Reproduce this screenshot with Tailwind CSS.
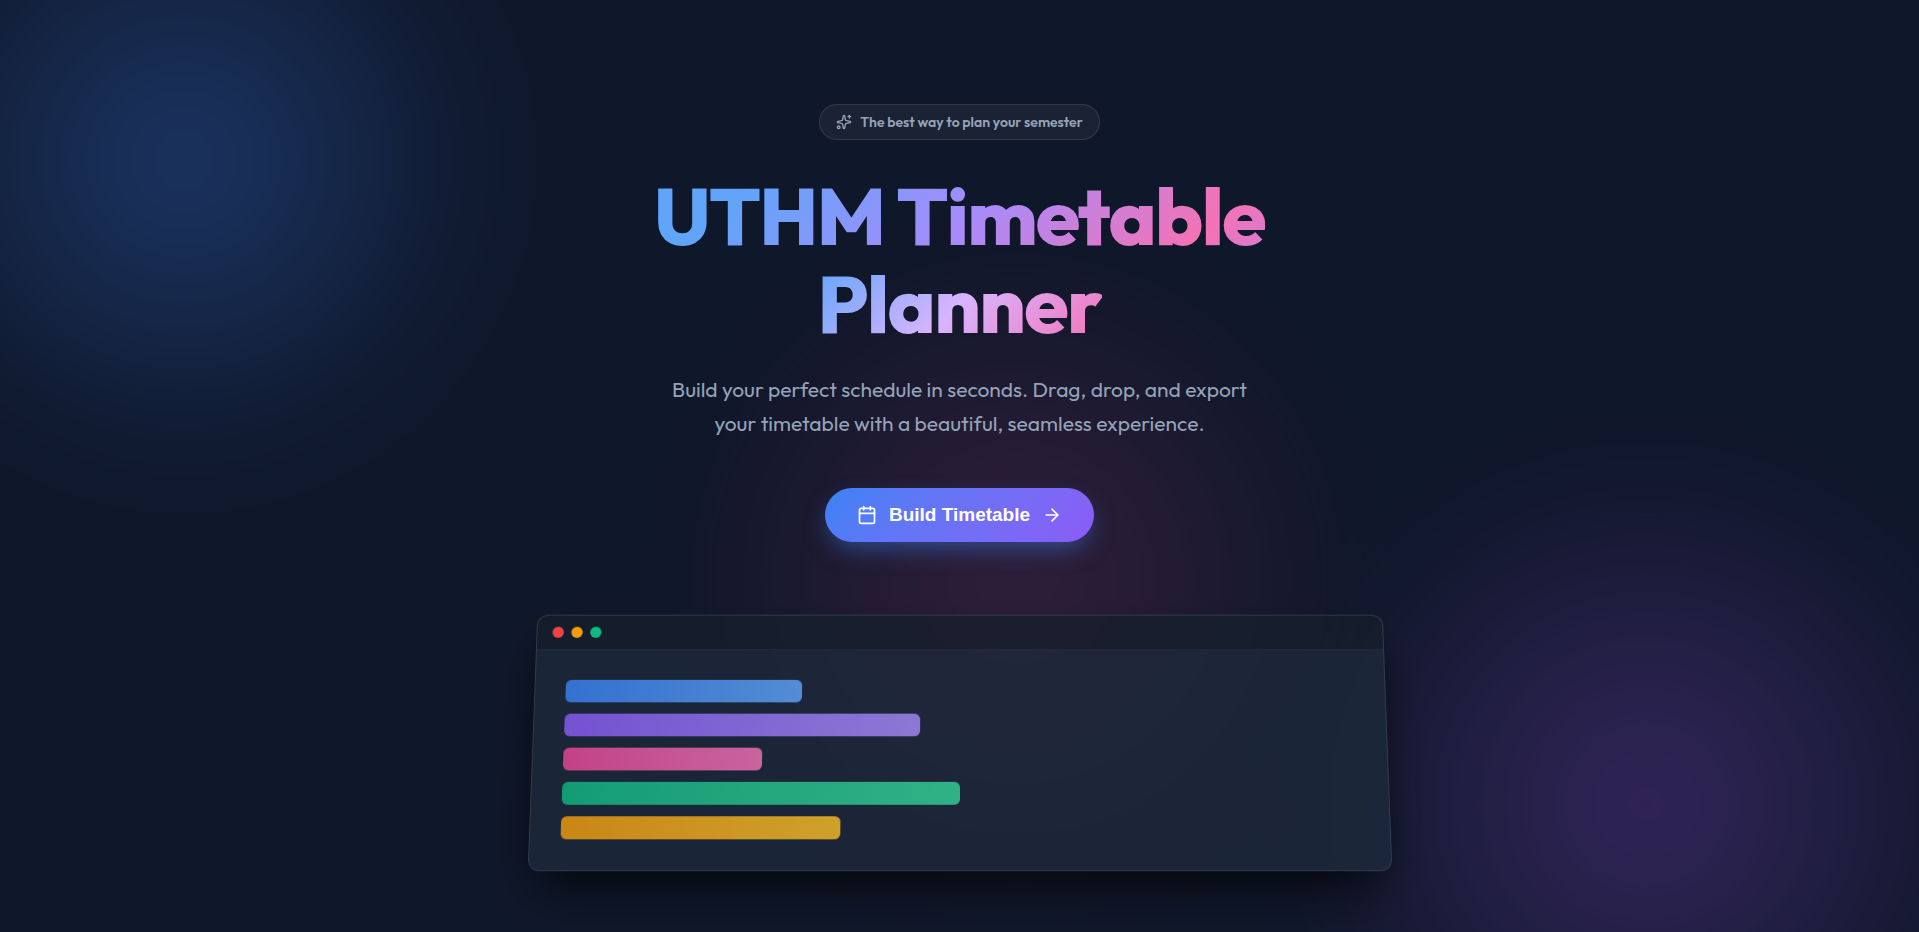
<!DOCTYPE html>
<html lang="en">

<head>
    <meta charset="UTF-8">
    <meta name="viewport" content="width=device-width, initial-scale=1.0">
    <title>UTHM Timetable Planner</title>
    <script src="https://cdn.jsdelivr.net/npm/@tailwindcss/browser@4"></script>
</head>

<body class="bg-[#0f172a] text-white font-[Outfit,Lato,sans-serif]">
    <main class="relative isolate flex flex-col items-center min-h-screen px-4 pt-26 pb-12 overflow-hidden">

        <!-- Background glows -->
        <div class="absolute inset-0 -z-10 overflow-hidden" aria-hidden="true">
            <div class="absolute -left-36 -top-42 size-164 rounded-full bg-[radial-gradient(circle,#3b82f6_0%,transparent_70%)] opacity-30 blur-[60px]"></div>
            <div class="absolute -right-22 -bottom-58 size-180 rounded-full bg-[radial-gradient(circle,#a855f7_0%,transparent_70%)] opacity-25 blur-[60px]"></div>
            <div class="absolute left-[53%] top-[62%] size-170 -translate-1/2 rounded-full bg-[radial-gradient(circle,#ec4899_0%,transparent_70%)] opacity-17 blur-[60px]"></div>
        </div>

        <div class="flex items-center gap-2 h-9 px-4 rounded-full border border-white/10 bg-white/5 text-sm font-semibold text-[#94a3b8]">
            <svg class="size-4" viewBox="0 0 24 24" fill="none" stroke="currentColor" stroke-width="2" stroke-linecap="round" stroke-linejoin="round" aria-hidden="true">
                <path d="M11.017 2.814a1 1 0 0 1 1.966 0l1.051 5.558a2 2 0 0 0 1.594 1.594l5.558 1.051a1 1 0 0 1 0 1.966l-5.558 1.051a2 2 0 0 0-1.594 1.594l-1.051 5.558a1 1 0 0 1-1.966 0l-1.051-5.558a2 2 0 0 0-1.594-1.594l-5.558-1.051a1 1 0 0 1 0-1.966l5.558-1.051a2 2 0 0 0 1.594-1.594z" />
                <path d="M20 2v4" />
                <path d="M22 4h-4" />
                <circle cx="4" cy="20" r="2" />
            </svg>
            <span>The best way to plan your semester</span>
        </div>

        <h1 class="flex flex-col items-center mt-8 text-center text-[80px] leading-[88px] font-extrabold tracking-[-0.02em]">
            <span class="bg-[linear-gradient(135deg,#60a5fa_15%,#a78bfa_52%,#f472b6_87%,#a78bfa_120%)] bg-clip-text text-transparent">UTHM Timetable</span>
            <span class="bg-[linear-gradient(135deg,#60a5fa_0%,#d8b4fe_50%,#f472b6_100%)] bg-clip-text text-transparent">Planner</span>
        </h1>

        <p class="max-w-150 mt-6 text-center text-[21px] leading-[34px] text-[#94a3b8]">
            Build your perfect schedule in seconds. Drag, drop, and export your timetable with a beautiful, seamless experience.
        </p>

        <button type="button" class="flex items-center gap-3 h-[54px] mt-12 px-8 rounded-full bg-linear-135 from-[#3b82f6] to-[#8b5cf6] font-['Liberation_Sans',Arial,sans-serif] text-[19px] font-bold text-white shadow-[0_10px_25px_-5px_#3b82f680] cursor-pointer">
            <svg class="size-5" viewBox="0 0 24 24" fill="none" stroke="currentColor" stroke-width="2" stroke-linecap="round" stroke-linejoin="round" aria-hidden="true">
                <path d="M8 2v4" />
                <path d="M16 2v4" />
                <rect width="18" height="18" x="3" y="4" rx="2" />
                <path d="M3 10h18" />
            </svg>
            Build Timetable
            <svg class="size-5" viewBox="0 0 24 24" fill="none" stroke="currentColor" stroke-width="2" stroke-linecap="round" stroke-linejoin="round" aria-hidden="true">
                <path d="M5 12h14" />
                <path d="m12 5 7 7-7 7" />
            </svg>
        </button>

        <!-- Tilted app window -->
        <div class="w-full max-w-225 mt-16 overflow-hidden rounded-xl border border-white/10 bg-[#1e293b]/75 shadow-[0_25px_50px_-12px_#000000cc] [transform:perspective(1000px)_rotateX(5deg)_scale(0.95)]">
            <div class="flex gap-2 px-4 py-3 border-b border-white/5 bg-black/20">
                <span class="size-3 rounded-full bg-[#ef4444]"></span>
                <span class="size-3 rounded-full bg-[#f59e0b]"></span>
                <span class="size-3 rounded-full bg-[#10b981]"></span>
            </div>
            <div class="flex flex-col gap-3 p-8">
                <div class="h-6 w-[30%] rounded-md bg-linear-to-r from-[#3b82f6] to-[#60a5fa] opacity-80"></div>
                <div class="h-6 w-[45%] rounded-md bg-linear-to-r from-[#8b5cf6] to-[#a78bfa] opacity-80"></div>
                <div class="h-6 w-[25%] rounded-md bg-linear-to-r from-[#ec4899] to-[#f472b6] opacity-80"></div>
                <div class="h-6 w-[50%] rounded-md bg-linear-to-r from-[#10b981] to-[#34d399] opacity-80"></div>
                <div class="h-6 w-[35%] rounded-md bg-linear-to-r from-[#f59e0b] to-[#fbbf24] opacity-80"></div>
            </div>
        </div>
    </main>
</body>

</html>
